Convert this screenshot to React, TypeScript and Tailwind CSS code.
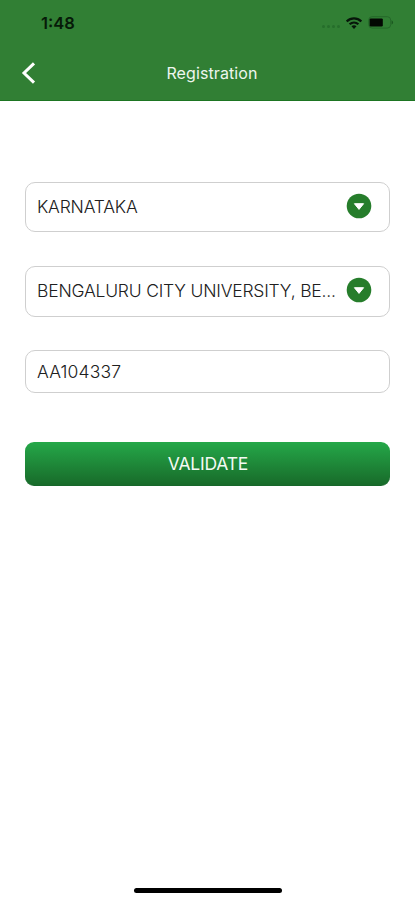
function WifiIcon() {
  return (
    <svg width="16" height="12" viewBox="0 0 16 12" fill="none" stroke="#07150a" strokeWidth="2.2">
      <path d="M.7 4.4C5 .3 11 .3 15.3 4.4" />
      <path d="M3.6 7.3C6.2 4.9 9.8 4.9 12.4 7.3" />
      <path d="M8 12L5.5 9.3C7 8 9 8 10.5 9.3Z" fill="#07150a" stroke="none" />
    </svg>
  );
}

function BatteryIcon() {
  return (
    <svg width="26" height="13" viewBox="0 0 26 13" fill="none">
      <rect x="0.7" y="0.7" width="22" height="11.4" rx="3.4" stroke="#246829" strokeWidth="1" />
      <rect x="1.6" y="2.4" width="13.2" height="8" rx="1.2" fill="#020702" />
      <path d="M23.6 4.2C25.6 5 25.6 7.8 23.6 8.6Z" fill="#1c5821" />
    </svg>
  );
}

function DropdownIcon() {
  return (
    <svg className="mb-[2px] shrink-0" width="26" height="26" viewBox="0 0 26 26">
      <circle cx="13" cy="13" r="12.3" fill="#267d2b" />
      <path d="M8.4 10.7H17.6L13 16.4Z" fill="#fff" stroke="#fff" strokeWidth="1" strokeLinejoin="round" />
    </svg>
  );
}

function SelectField({ value }: { value: string }) {
  return (
    <button className="flex h-[50.5px] w-full items-center justify-between rounded-[10px] border border-[#cfcfcf] bg-white pr-[17px] pl-[11px] text-left">
      <span className="whitespace-nowrap tracking-[-0.2px]">{value}</span>
      <DropdownIcon />
    </button>
  );
}

export default function App() {
  return (
    <div className="flex h-[900px] w-[415px] flex-col overflow-hidden bg-white font-['Inter',sans-serif] text-[17.5px] leading-6 font-light text-[#202020]">
      <header className="flex h-[100.5px] shrink-0 flex-col border-b border-[#1d7522] bg-[#317f34]">
        <div className="flex h-[46px] items-center justify-between pr-[21px] pl-[41px]">
          <span className="text-[16.5px] font-semibold text-[#061a08]">1:48</span>
          <div className="flex items-center">
            <div className="mt-[8px] mr-[6px] flex gap-[2px]">
              <i className="size-[3px] rounded-full bg-[#266e2b]" />
              <i className="size-[3px] rounded-full bg-[#266e2b]" />
              <i className="size-[3px] rounded-full bg-[#266e2b]" />
              <i className="size-[3px] rounded-full bg-[#266e2b]" />
            </div>
            <WifiIcon />
            <div className="ml-[6.5px]"><BatteryIcon /></div>
          </div>
        </div>
        <div className="grid h-[54px] grid-cols-[50px_1fr_50px] items-center">
          <svg className="ml-[20px]" width="18" height="26" viewBox="0 0 18 26" fill="none" stroke="#fff" strokeWidth="3">
            <path d="M14 3.3L4 13L14 22.7" />
          </svg>
          <h1 className="pl-[9px] text-center text-[16px] font-normal tracking-[0.1px] text-[#eef6ee]">Registration</h1>
        </div>
      </header>
      <main className="flex flex-1 flex-col px-[25px] pt-[81px]">
        <SelectField value="KARNATAKA" />
        <div className="mt-[34px]">
          <SelectField value="BENGALURU CITY UNIVERSITY, BE..." />
        </div>
        <div className="mt-[33.5px] flex h-[42.5px] items-center rounded-[10px] border border-[#cfcfcf] pt-px pl-[11px] tracking-[0.15px]">AA104337</div>
        <button className="mt-[49px] h-[44.5px] rounded-[9px] border-b border-[#17672a] bg-linear-to-b from-[#25a849] to-[#186b2a] pt-[2px] pl-px font-normal text-[#f4faf4]">
          <span className="tracking-[-0.2px]">VALIDATE</span>
        </button>
      </main>
      <footer className="flex h-[14px] shrink-0 items-start justify-center">
        <div className="mt-[1.5px] h-[5px] w-[148px] rounded-full bg-black" />
      </footer>
    </div>
  );
}
